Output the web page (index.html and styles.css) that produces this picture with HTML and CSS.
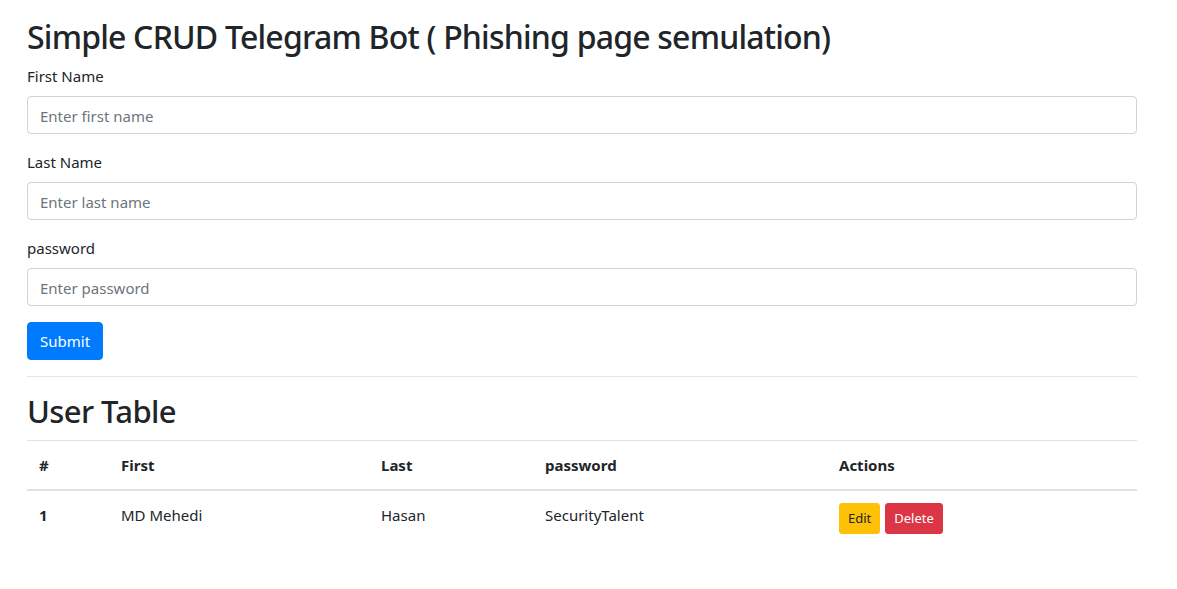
FILE: index.html
```html
<!DOCTYPE html>
<html lang="en">
<head>
<meta charset="utf-8">
<title>Simple CRUD Telegram Bot</title>
<link rel="stylesheet" href="styles.css">
</head>
<body>
<div class="container">
  <h1 class="title">Simple CRUD Telegram Bot ( Phishing page semulation)</h1>
  <form class="form">
    <div class="form-group">
      <label class="label" for="first">First Name</label>
      <input class="input" id="first" type="text" placeholder="Enter first name">
    </div>
    <div class="form-group">
      <label class="label" for="last">Last Name</label>
      <input class="input" id="last" type="text" placeholder="Enter last name">
    </div>
    <div class="form-group">
      <label class="label" for="pass">password</label>
      <input class="input" id="pass" type="text" placeholder="Enter password">
    </div>
    <button type="button" class="btn btn-primary">Submit</button>
  </form>
  <hr class="divider">
  <h2 class="subtitle">User Table</h2>
  <table class="table">
    <thead>
      <tr>
        <th class="c1">#</th>
        <th class="c2">First</th>
        <th class="c3">Last</th>
        <th class="c4">password</th>
        <th class="c5">Actions</th>
      </tr>
    </thead>
    <tbody>
      <tr>
        <th>1</th>
        <td>MD Mehedi</td>
        <td>Hasan</td>
        <td>SecurityTalent</td>
        <td>
          <div class="actions">
            <button type="button" class="btn btn-sm btn-warning">Edit</button>
            <button type="button" class="btn btn-sm btn-danger">Delete</button>
          </div>
        </td>
      </tr>
    </tbody>
  </table>
</div>
</body>
</html>
```
FILE: styles.css
```css
* { box-sizing: border-box; }
body {
  margin: 0;
  background: #fff;
  color: #212529;
  font-family: "Noto Sans", "Open Sans", sans-serif;
  font-size: 16px;
  line-height: 1.5;
}
.container {
  width: 1110px;
  margin-left: 27px;
  padding-top: 17px;
}
.title {
  margin: 0 0 8px;
  font-size: 32px;
  font-weight: 500;
  letter-spacing: -0.8px;
  line-height: 39px;
}
.form-group { margin-bottom: 16px; }
.label {
  display: block;
  margin-bottom: 8px;
  font-size: 15px;
  line-height: 24px;
}
.input {
  display: block;
  width: 100%;
  height: 38px;
  padding: 6px 12px 5px;
  font: inherit;
  font-size: 15px;
  color: #495057;
  background: #fff;
  border: 1px solid #ced4da;
  border-radius: 4px;
  outline: none;
}
.input::placeholder { color: #6c757d; opacity: 1; }
.btn {
  display: inline-block;
  font-family: inherit;
  font-size: 15px;
  line-height: 24px;
  padding: 6px 12px;
  border: 1px solid transparent;
  border-radius: 4px;
  cursor: pointer;
}
.btn-primary { background: #007bff; border-color: #007bff; color: #fff; }
.btn-sm { font-size: 13px; line-height: 21px; padding: 4px 8px; border-radius: 3px; }
.btn-warning { background: #ffc107; border-color: #ffc107; color: #212529; }
.btn-danger { background: #dc3545; border-color: #dc3545; color: #fff; }
.divider {
  margin: 16px 0 13px;
  border: 0;
  border-top: 1px solid rgba(0,0,0,.1);
}
.subtitle {
  margin: 0 0 8px;
  font-size: 31px;
  font-weight: 500;
  letter-spacing: -0.6px;
  line-height: 42px;
}
.table {
  width: 100%;
  border-collapse: collapse;
  font-size: 15px;
}
.table th, .table td {
  padding: 13px 12px 12px;
  text-align: left;
  vertical-align: top;
  border-top: 1px solid #dee2e6;
  line-height: 23px;
}
.table thead th { border-bottom: 2px solid #dee2e6; font-weight: 700; }
.table tbody th { font-weight: 700; }
.table tbody td { padding-top: 13px; }
.c1 { width: 82px; }
.c2 { width: 260px; }
.c3 { width: 164px; }
.c4 { width: 294px; }
.c5 { width: 310px; }
.actions { display: flex; gap: 5px; margin-top: -1px; }
```
